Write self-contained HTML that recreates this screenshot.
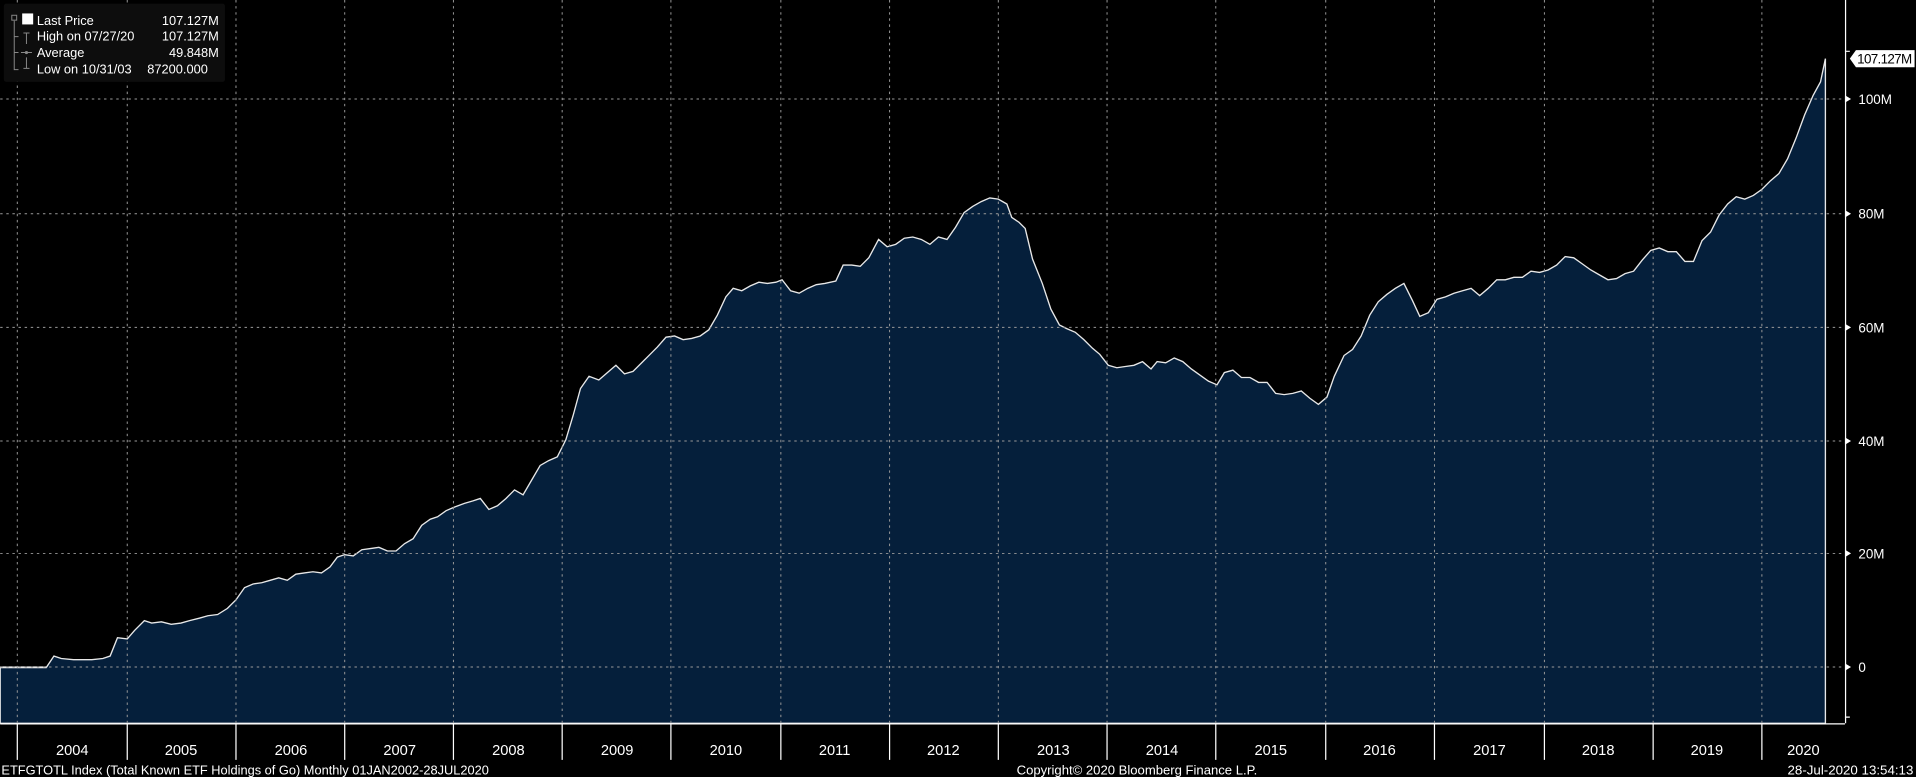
<!DOCTYPE html>
<html><head><meta charset="utf-8"><style>
html,body{margin:0;padding:0;background:#000;overflow:hidden}
svg{display:block}
text{font-family:"Liberation Sans","DejaVu Sans",sans-serif;fill:#fff}
</style></head><body>
<svg width="1916" height="777" viewBox="0 0 1568 636" xmlns="http://www.w3.org/2000/svg">
<rect width="1568" height="636" fill="#000"/>
<path fill="#051f3b" stroke="#e8e8e8" stroke-width="1.1" d="M0,546 L38,546 L44,537 L50,539 L60,540 L75,540 L84,539 L90,537 L96,522 L104,523 L110,516 L118,508 L124,510 L132,509 L140,511 L148,510 L155,508 L163,506 L170,504 L178,503 L186,498 L193,491 L200,481 L207,478 L214,477 L221,475 L228,473 L235,475 L242,470 L249,469 L256,468 L263,469 L270,464 L276,456 L282,454 L289,455 L296,450 L303,449 L310,448 L317,451 L324,451 L331,445 L338,441 L345,430 L352,425 L358,423 L365,418 L372,415 L380,412 L387,410 L393,408 L400,417 L407,414 L414,408 L421,401 L428,405 L435,393 L442,381 L449,377 L456,374 L463,360 L469,340 L475,318 L482,308 L490,311 L497,305 L504,299 L511,306 L518,304 L525,297 L532,290 L538,284 L545,276 L552,275 L559,278 L566,277 L573,275 L580,270 L587,258 L594,243 L600,236 L607,238 L614,234 L621,231 L628,232 L635,231 L640,229 L647,238 L654,240 L661,236 L668,233 L675,232 L684,230 L690,217 L697,217 L704,218 L711,211 L719,196 L726,202 L733,200 L740,195 L747,194 L754,196 L761,200 L768,194 L775,196 L782,186 L789,174 L796,169 L803,165 L810,162 L817,163 L824,167 L828,178 L834,182 L839,187 L845,212 L853,232 L860,253 L867,266 L873,269 L880,272 L887,278 L894,285 L900,290 L907,299 L914,301 L921,300 L928,299 L935,296 L942,302 L947,296 L954,297 L961,293 L968,296 L975,302 L982,307 L989,312 L996,315 L1002,305 L1009,303 L1016,309 L1023,309 L1030,313 L1037,313 L1044,322 L1051,323 L1058,322 L1065,320 L1072,326 L1079,331 L1086,325 L1092,308 L1100,291 L1107,286 L1114,275 L1121,258 L1128,247 L1135,241 L1142,236 L1149,232 L1156,246 L1162,259 L1169,256 L1176,245 L1183,243 L1190,240 L1197,238 L1204,236 L1211,242 L1218,236 L1225,229 L1232,229 L1239,227 L1246,227 L1253,222 L1260,223 L1267,221 L1274,217 L1281,210 L1288,211 L1295,216 L1302,221 L1309,225 L1316,229 L1323,228 L1330,224 L1337,222 L1344,213 L1351,205 L1358,203 L1365,206 L1372,206 L1379,214 L1386,214 L1393,197 L1400,190 L1407,176 L1414,167 L1421,161 L1428,163 L1435,160 L1442,155 L1449,148 L1456,142 L1463,130 L1470,113 L1477,94 L1484,78 L1490,67 L1494,48 L1494,592 L0,592 Z"/>
<rect x="0" y="546" width="38" height="1" fill="#e8e8e8"/>
<g stroke="#9a9a9a" stroke-width="0.8" stroke-dasharray="2,3" fill="none">
<path d="M0,546H1510M0,453H1510M0,361H1510M0,268H1510M0,175H1510M0,81H1510"/>
<path d="M14,0V592M104,0V592M193,0V592M282,0V592M371,0V592M460,0V592M549,0V592M639,0V592M728,0V592M817,0V592M906,0V592M995,0V592M1085,0V592M1174,0V592M1264,0V592M1353,0V592M1442,0V592"/>
</g>
<g stroke="#fff" stroke-width="1" fill="none">
<path d="M0,592.5H1510M1510.5,0V592"/>
<path d="M14,592V622M104,592V622M193,592V622M282,592V622M371,592V622M460,592V622M549,592V622M639,592V622M728,592V622M817,592V622M906,592V622M995,592V622M1085,592V622M1174,592V622M1264,592V622M1353,592V622M1442,592V622"/>
<path d="M1510,42H1514M1510,587H1514"/>
</g>
<g fill="#fff">
<path d="M1510,543L1515,546L1510,549Z M1510,450L1515,453L1510,456Z M1510,358L1515,361L1510,364Z M1510,265L1515,268L1510,271Z M1510,172L1515,175L1510,178Z M1510,78L1515,81L1510,84Z"/>
<path d="M1514,48L1519,41H1567V55H1519Z"/>
</g>
<g font-size="11">
<text x="1521" y="550">0</text>
<text x="1521" y="457">20M</text>
<text x="1521" y="365">40M</text>
<text x="1521" y="272">60M</text>
<text x="1521" y="179">80M</text>
<text x="1521" y="85">100M</text>
<text x="1520" y="52" style="fill:#000" textLength="45">107.127M</text>
</g>
<g font-size="12" text-anchor="middle">
<text x="59" y="618">2004</text><text x="148" y="618">2005</text><text x="238" y="618">2006</text><text x="327" y="618">2007</text><text x="416" y="618">2008</text><text x="505" y="618">2009</text><text x="594" y="618">2010</text><text x="683" y="618">2011</text><text x="772" y="618">2012</text><text x="862" y="618">2013</text><text x="951" y="618">2014</text><text x="1040" y="618">2015</text><text x="1129" y="618">2016</text><text x="1219" y="618">2017</text><text x="1308" y="618">2018</text><text x="1397" y="618">2019</text><text x="1476" y="618">2020</text>
</g>
<g font-size="10.5">
<text x="1" y="634" textLength="399" lengthAdjust="spacingAndGlyphs">ETFGTOTL Index (Total Known ETF Holdings of Go)  Monthly 01JAN2002-28JUL2020</text>
<text x="832" y="634" textLength="197" lengthAdjust="spacingAndGlyphs">Copyright© 2020 Bloomberg Finance L.P.</text>
<text x="1463" y="634" textLength="103" lengthAdjust="spacingAndGlyphs">28-Jul-2020 13:54:13</text>
</g>
<rect x="3" y="3" width="181" height="64" rx="2" fill="#0d0d0d"/>
<g stroke="#888" stroke-width="0.8" fill="none">
<rect x="9.5" y="12.5" width="4" height="4"/>
<path d="M11.5,17V57H15M11.5,30H15M11.5,43H15"/>
<path d="M19,27H24M21.5,27V36M17,43H26M19,56H24M21.5,56V47"/>
</g>
<rect x="18" y="11" width="9" height="9" fill="#fff"/>
<circle cx="21.5" cy="43" r="1.3" fill="#888"/>
<g font-size="10.5">
<text x="30" y="20.5">Last Price</text><text x="179" y="20.5" text-anchor="end">107.127M</text>
<text x="30" y="33">High on 07/27/20</text><text x="179" y="33" text-anchor="end">107.127M</text>
<text x="30" y="46.5">Average</text><text x="179" y="46.5" text-anchor="end">49.848M</text>
<text x="30" y="60">Low on 10/31/03</text><text x="170" y="60" text-anchor="end">87200.000</text>
</g>
</svg>
</body></html>
